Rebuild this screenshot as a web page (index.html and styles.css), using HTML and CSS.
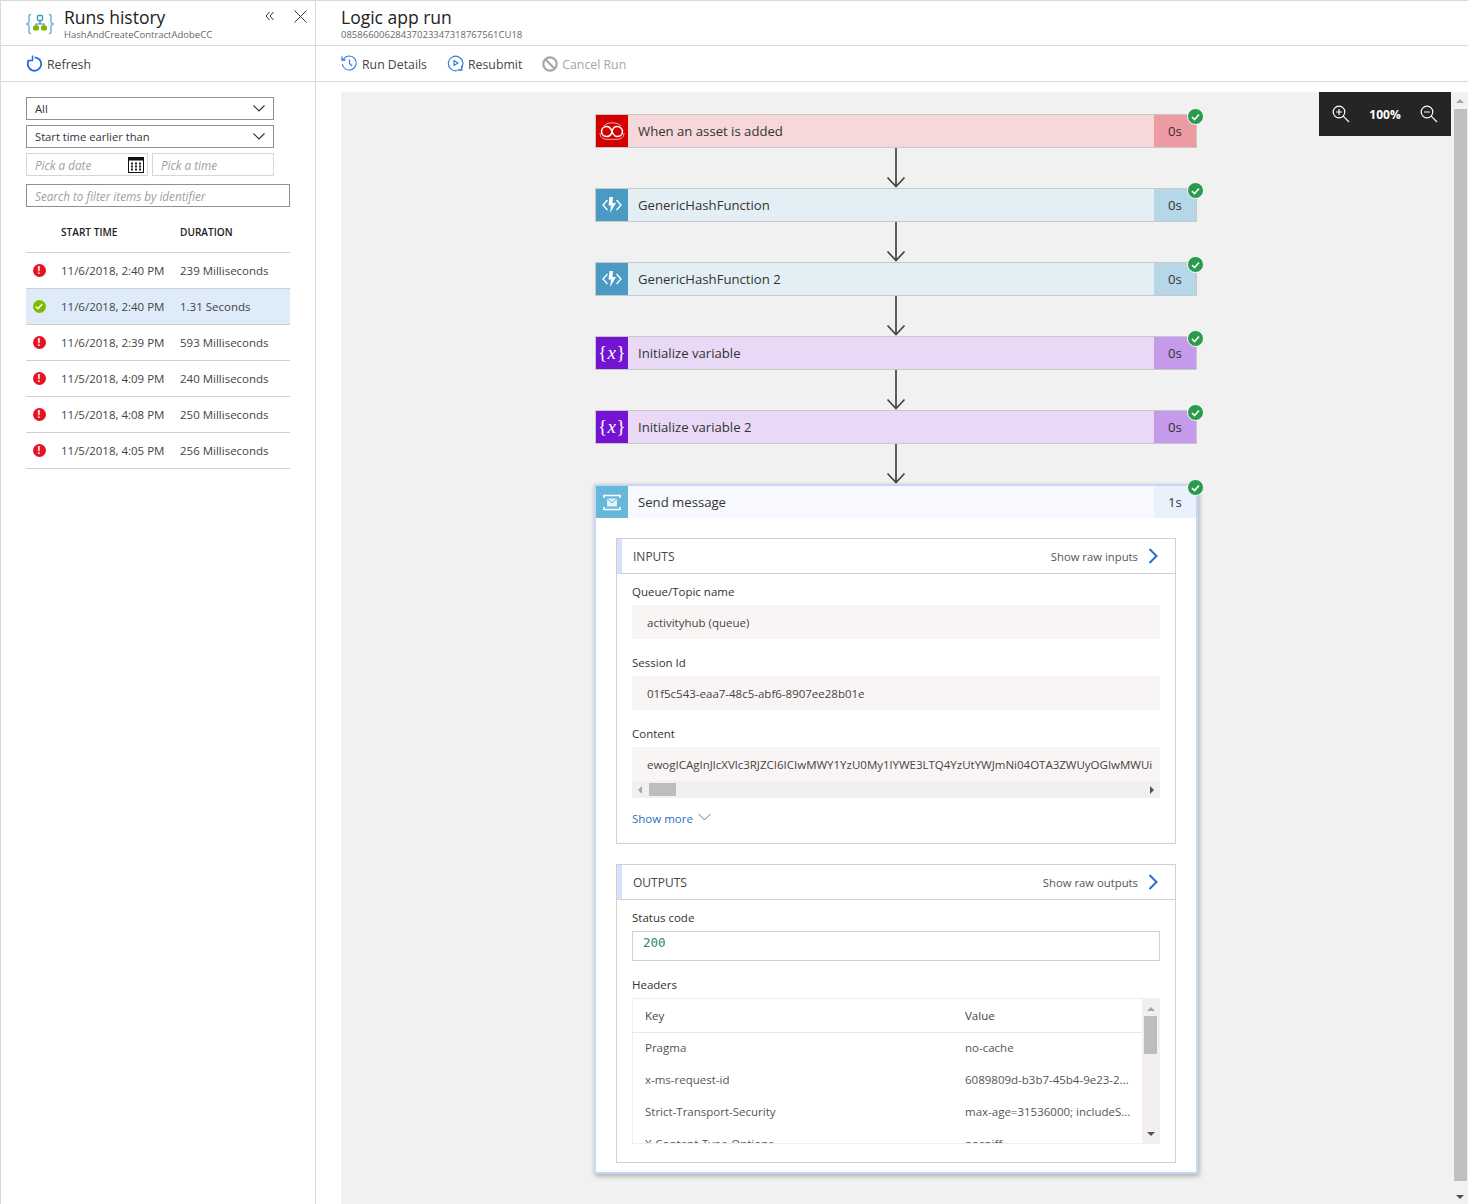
FILE: index.html
```html
<!DOCTYPE html>
<html>
<head>
<meta charset="utf-8">
<title>Logic app run</title>
<link rel="stylesheet" href="styles.css">
</head>
<body>
<div class="app">

    <div class="blade blade-side">
        <div class="bladeHeader sideHeader">
            <svg class="appIcon" width="28" height="24" viewBox="0 0 28 24" fill="none">
                <path d="M5 2.500C2.500 2.500 3 4 3 7V9.500C3 11 2 11.500 1 12C2 12.500 3 13 3 14.500V17C3 20 2.500 21.500 5 21.500" stroke="#59b4d9" stroke-width="1.400"/>
                <path d="M23 2.500C25.500 2.500 25 4 25 7V9.500C25 11 26 11.500 27 12C26 12.500 25 13 25 14.500V17C25 20 25.500 21.500 23 21.500" stroke="#59b4d9" stroke-width="1.400"/>
                <path d="M14 8V12M10 17V12H18V17" stroke="#3f7fb5" stroke-width="1.200"/>
                <rect x="11.500" y="3.500" width="5" height="5" rx="1" fill="#fff" stroke="#3999c6" stroke-width="1.400"/>
                <rect x="7" y="13.500" width="6" height="5" rx="1.500" fill="#7fba00"/>
                <rect x="15" y="13.500" width="6" height="5" rx="1.500" fill="#7fba00"/>
            </svg>
            <div class="titleBlock">
                <div class="bladeTitle">Runs history</div>
                <div class="bladeSub">HashAndCreateContractAdobeCC</div>
            </div>
            <svg class="collapseIcon" width="10" height="10" viewBox="0 0 10 10" fill="none" stroke="#333" stroke-width="1">
                <path d="M4.500 1L1 5L4.500 9M8.500 1L5 5L8.500 9"/>
            </svg>
            <svg class="closeIcon" width="13" height="13" viewBox="0 0 13 13" fill="none" stroke="#333" stroke-width="1">
                <path d="M.5 .5L12.500 12.500M12.500 .5L.5 12.500"/>
            </svg>
        </div>
        <div class="toolbar sideToolbar">
            <div class="toolButton">
                <svg width="17" height="17" viewBox="0 0 17 17" fill="none" stroke="#1d6fd1">
                    <path d="M8.500 2.300A6.700 6.700 0 1 1 2.600 5.800" stroke-width="1.800"/>
                    <path d="M6.500 .5V5.500H1.500" stroke-width="1.500"/>
                </svg>
                <span>Refresh</span>
            </div>
        </div>
        <div class="filters">
            <div class="selectBox"><span>All</span><svg width="12" height="7" viewBox="0 0 12 7" fill="none" stroke="#333" stroke-width="1.200"><path d="M.5 .5L6 6L11.500 .5"/></svg></div>
            <div class="selectBox"><span>Start time earlier than</span><svg width="12" height="7" viewBox="0 0 12 7" fill="none" stroke="#333" stroke-width="1.200"><path d="M.5 .5L6 6L11.500 .5"/></svg></div>
            <div class="dateRow">
                <div class="inputBox inputLight">
                    <span>Pick a date</span>
                    <svg class="calendar" width="16" height="16" viewBox="0 0 16 16">
                        <rect x=".5" y=".5" width="15" height="15" fill="#fff" stroke="#111"/>
                        <rect x="0" y="0" width="16" height="3.500" fill="#111"/>
                        <path d="M3 5.500h2v2H3zM7 5.500h2v2H7zM11 5.500h2v2h-2zM3 8.500h2v2H3zM7 8.500h2v2H7zM11 8.500h2v2h-2zM3 11.500h2v2H3zM7 11.500h2v2H7zM11 11.500h2v2h-2z" fill="#222"/>
                    </svg>
                </div>
                <div class="inputBox inputLight"><span>Pick a time</span></div>
            </div>
            <div class="inputBox searchBox"><span>Search to filter items by identifier</span></div>
        </div>
        <div class="runs">
            <div class="runRow runHead">
                <span class="colIcon"></span>
                <span class="colStart">START TIME</span>
                <span class="colDur">DURATION</span>
            </div>
            <div class="runRow">
                <span class="colIcon"><span class="dot dotErr">!</span></span>
                <span class="colStart">11/6/2018, 2:40 PM</span>
                <span class="colDur">239 Milliseconds</span>
            </div>
            <div class="runRow runSelected">
                <span class="colIcon"><span class="dot dotOk"><svg width="8" height="7" viewBox="0 0 8 7" fill="none" stroke="#fff" stroke-width="1.500"><path d="M.8 3.500L3 5.700L7.200 1"/></svg></span></span>
                <span class="colStart">11/6/2018, 2:40 PM</span>
                <span class="colDur">1.31 Seconds</span>
            </div>
            <div class="runRow">
                <span class="colIcon"><span class="dot dotErr">!</span></span>
                <span class="colStart">11/6/2018, 2:39 PM</span>
                <span class="colDur">593 Milliseconds</span>
            </div>
            <div class="runRow">
                <span class="colIcon"><span class="dot dotErr">!</span></span>
                <span class="colStart">11/5/2018, 4:09 PM</span>
                <span class="colDur">240 Milliseconds</span>
            </div>
            <div class="runRow">
                <span class="colIcon"><span class="dot dotErr">!</span></span>
                <span class="colStart">11/5/2018, 4:08 PM</span>
                <span class="colDur">250 Milliseconds</span>
            </div>
            <div class="runRow">
                <span class="colIcon"><span class="dot dotErr">!</span></span>
                <span class="colStart">11/5/2018, 4:05 PM</span>
                <span class="colDur">256 Milliseconds</span>
            </div>
        </div>
    </div>

    <div class="blade blade-main">
        <div class="bladeHeader mainHeader">
            <div class="titleBlock">
                <div class="bladeTitle">Logic app run</div>
                <div class="bladeSub">08586600628437023347318767561CU18</div>
            </div>
        </div>
        <div class="toolbar mainToolbar">
            <div class="toolButton">
                <svg width="17" height="17" viewBox="0 0 17 17" fill="none" stroke="#2b79d6" stroke-width="1.100">
                    <path d="M2.500 4A7 7 0 1 1 1.300 9"/>
                    <path d="M1 1.500V5H4.500" stroke-width="1.300"/>
                    <path d="M8.500 4.500V8.500L11 11"/>
                </svg>
                <span>Run Details</span>
            </div>
            <div class="toolButton">
                <svg width="17" height="17" viewBox="0 0 17 17" fill="none" stroke="#2b79d6" stroke-width="1.100">
                    <path d="M14 13.500A7.300 7.300 0 1 0 10 15.700"/>
                    <path d="M7 5.500V10.500L11 8Z"/>
                    <path d="M14.800 10.500V15H10.500" stroke-width="1.300"/>
                </svg>
                <span>Resubmit</span>
            </div>
            <div class="toolButton toolDisabled">
                <svg width="16" height="16" viewBox="0 0 16 16" fill="none" stroke="#a6a6a6" stroke-width="2.200">
                    <circle cx="8" cy="8" r="6.700"/>
                    <path d="M3.200 3.200L12.800 12.800"/>
                </svg>
                <span>Cancel Run</span>
            </div>
        </div>
        <div class="mainBody">
            <div class="canvas">
                <div class="zoomBar">
                    <svg width="20" height="20" viewBox="0 0 20 20" fill="none" stroke="#fff" stroke-width="1.200">
                        <circle cx="8" cy="8" r="5.800"/><path d="M12.200 12.200L18 18M5 8H11M8 5V11"/>
                    </svg>
                    <span class="zoomText">100%</span>
                    <svg width="20" height="20" viewBox="0 0 20 20" fill="none" stroke="#fff" stroke-width="1.200">
                        <circle cx="8" cy="8" r="5.800"/><path d="M12.200 12.200L18 18M5 8H11"/>
                    </svg>
                </div>

                <div class="card cardRed">
                    <div class="cardIcon">
                        <svg width="26" height="18" viewBox="0 0 26 18" fill="none" stroke="#fff">
                            <path d="M8 5.500C4.500 5.500 2.500 8 2.500 10.500C2.500 13.500 5 15.500 8 15.500C11 15.500 12.500 13 13 10.500C13.500 8 15 5.500 18 5.500C21 5.500 23.500 8 23.500 10.500C23.500 13.500 21 15.500 18 15.500C15 15.500 14 13 13 10.500C12 8 11 5.500 8 5.500Z" stroke-width="1.500" transform="translate(0 -1)"/>
                            <path d="M5 4C6.500 2 9.500 .8 13 .8C17 .8 20.500 2 22 4M1 11C1 14.500 3.500 17 7 17.300H19C22.500 17 25 14.500 25 11" stroke-width=".7"/>
                        </svg>
                    </div>
                    <div class="cardTitle">When an asset is added</div>
                    <div class="cardTime">0s</div>
                    <span class="badge"><svg width="9" height="8" viewBox="0 0 9 8" fill="none" stroke="#fff" stroke-width="1.600"><path d="M1 4L3.500 6.500L8 1.500"/></svg></span>
                </div>
                <svg class="arrow" width="22" height="40" viewBox="0 0 22 40" fill="none" stroke="#444" stroke-width="1.700"><path d="M11 0V39M2.500 29.500L11 38.500L19.500 29.500"/></svg>

                <div class="card cardBlue">
                    <div class="cardIcon">
                        <svg width="20" height="18" viewBox="0 0 20 18">
                            <path d="M5.500 4L1 9L5.500 14M14.500 4L19 9L14.500 14" fill="none" stroke="#fff" stroke-width="1.300"/>
                            <path d="M11 1H7.500L6.500 9.500H9L8 17L14 7H10.500Z" fill="#fff"/>
                        </svg>
                    </div>
                    <div class="cardTitle">GenericHashFunction</div>
                    <div class="cardTime">0s</div>
                    <span class="badge"><svg width="9" height="8" viewBox="0 0 9 8" fill="none" stroke="#fff" stroke-width="1.600"><path d="M1 4L3.500 6.500L8 1.500"/></svg></span>
                </div>
                <svg class="arrow" width="22" height="40" viewBox="0 0 22 40" fill="none" stroke="#444" stroke-width="1.700"><path d="M11 0V39M2.500 29.500L11 38.500L19.500 29.500"/></svg>

                <div class="card cardBlue">
                    <div class="cardIcon">
                        <svg width="20" height="18" viewBox="0 0 20 18">
                            <path d="M5.500 4L1 9L5.500 14M14.500 4L19 9L14.500 14" fill="none" stroke="#fff" stroke-width="1.300"/>
                            <path d="M11 1H7.500L6.500 9.500H9L8 17L14 7H10.500Z" fill="#fff"/>
                        </svg>
                    </div>
                    <div class="cardTitle">GenericHashFunction 2</div>
                    <div class="cardTime">0s</div>
                    <span class="badge"><svg width="9" height="8" viewBox="0 0 9 8" fill="none" stroke="#fff" stroke-width="1.600"><path d="M1 4L3.500 6.500L8 1.500"/></svg></span>
                </div>
                <svg class="arrow" width="22" height="40" viewBox="0 0 22 40" fill="none" stroke="#444" stroke-width="1.700"><path d="M11 0V39M2.500 29.500L11 38.500L19.500 29.500"/></svg>

                <div class="card cardPurple">
                    <div class="cardIcon varIcon">{<i>x</i>}</div>
                    <div class="cardTitle">Initialize variable</div>
                    <div class="cardTime">0s</div>
                    <span class="badge"><svg width="9" height="8" viewBox="0 0 9 8" fill="none" stroke="#fff" stroke-width="1.600"><path d="M1 4L3.500 6.500L8 1.500"/></svg></span>
                </div>
                <svg class="arrow" width="22" height="40" viewBox="0 0 22 40" fill="none" stroke="#444" stroke-width="1.700"><path d="M11 0V39M2.500 29.500L11 38.500L19.500 29.500"/></svg>

                <div class="card cardPurple">
                    <div class="cardIcon varIcon">{<i>x</i>}</div>
                    <div class="cardTitle">Initialize variable 2</div>
                    <div class="cardTime">0s</div>
                    <span class="badge"><svg width="9" height="8" viewBox="0 0 9 8" fill="none" stroke="#fff" stroke-width="1.600"><path d="M1 4L3.500 6.500L8 1.500"/></svg></span>
                </div>
                <svg class="arrow" width="22" height="40" viewBox="0 0 22 40" fill="none" stroke="#444" stroke-width="1.700"><path d="M11 0V39M2.500 29.500L11 38.500L19.500 29.500"/></svg>

                <div class="card cardOpen">
                    <div class="openHead">
                        <div class="cardIcon">
                            <svg width="18" height="17" viewBox="0 0 18 17">
                                <path d="M1 4V1.500H17V4M1 13V15.500H17V13" fill="none" stroke="#fff" stroke-width="1.600"/>
                                <rect x="4" y="4.500" width="10" height="8" fill="#e4f2f9"/>
                                <path d="M4 4.500L9 9L14 4.500" fill="none" stroke="#66b8da"/>
                            </svg>
                        </div>
                        <div class="cardTitle">Send message</div>
                        <div class="cardTime">1s</div>
                    </div>
                    <span class="badge"><svg width="9" height="8" viewBox="0 0 9 8" fill="none" stroke="#fff" stroke-width="1.600"><path d="M1 4L3.500 6.500L8 1.500"/></svg></span>

                    <div class="panel">
                        <div class="panelHead">
                            <span class="panelTitle">INPUTS</span>
                            <span class="rawLink">Show raw inputs</span>
                            <svg width="10" height="16" viewBox="0 0 10 16" fill="none" stroke="#2a6fc0" stroke-width="2"><path d="M1.500 1L8.500 8L1.500 15"/></svg>
                        </div>
                        <div class="panelBody">
                            <div class="fieldLabel">Queue/Topic name</div>
                            <div class="fieldValue">activityhub (queue)</div>
                            <div class="fieldLabel">Session Id</div>
                            <div class="fieldValue">01f5c543-eaa7-48c5-abf6-8907ee28b01e</div>
                            <div class="fieldLabel">Content</div>
                            <div class="fieldValue">ewogICAgInJlcXVlc3RJZCI6ICIwMWY1YzU0My1lYWE3LTQ4YzUtYWJmNi04OTA3ZWUyOGIwMWUi</div>
                            <div class="hScroll">
                                <span class="triLeft"></span>
                                <span class="hThumb"></span>
                                <span class="triRight"></span>
                            </div>
                            <div class="showMore">
                                <span>Show more</span>
                                <svg width="13" height="8" viewBox="0 0 13 8" fill="none" stroke="#2a6fc0" stroke-width=".9"><path d="M.5 1L6.500 7L12.500 1"/></svg>
                            </div>
                        </div>
                    </div>

                    <div class="panel panelOut">
                        <div class="panelHead">
                            <span class="panelTitle">OUTPUTS</span>
                            <span class="rawLink">Show raw outputs</span>
                            <svg width="10" height="16" viewBox="0 0 10 16" fill="none" stroke="#2a6fc0" stroke-width="2"><path d="M1.500 1L8.500 8L1.500 15"/></svg>
                        </div>
                        <div class="panelBody">
                            <div class="fieldLabel">Status code</div>
                            <div class="statusBox">200</div>
                            <div class="fieldLabel">Headers</div>
                            <div class="kvTable">
                                <div class="kvRows">
                                    <div class="kvRow kvHead"><span class="kvKey">Key</span><span class="kvVal">Value</span></div>
                                    <div class="kvRow"><span class="kvKey">Pragma</span><span class="kvVal">no-cache</span></div>
                                    <div class="kvRow"><span class="kvKey">x-ms-request-id</span><span class="kvVal">6089809d-b3b7-45b4-9e23-2...</span></div>
                                    <div class="kvRow"><span class="kvKey">Strict-Transport-Security</span><span class="kvVal">max-age=31536000; includeS...</span></div>
                                    <div class="kvRow"><span class="kvKey">X-Content-Type-Options</span><span class="kvVal">nosniff</span></div>
                                </div>
                                <div class="vScroll">
                                    <span class="triUp"></span>
                                    <span class="vThumb"></span>
                                    <span class="triDown"></span>
                                </div>
                            </div>
                        </div>
                    </div>
                </div>
            </div>
            <div class="pageScroll">
                <span class="triUp"></span>
                <span class="pageThumb"></span>
                <span class="triDown"></span>
            </div>
        </div>
    </div>

</div>
</body>
</html>
```

FILE: styles.css
```css
* {
    box-sizing: border-box;
}

html, body {
    margin: 0;
    height: 100%;
    overflow: hidden;
}

body {
    background-color: white;
    color: #333;
    font-family: "Open Sans", "Liberation Sans", sans-serif;
    font-size: 11.500px;
}

.app {
    display: flex;
    height: 100vh;
    border-top: 1px solid #d9d9d9;
    border-left: 1px solid #d9d9d9;
}

.blade {
    display: flex;
    flex-direction: column;
    height: 100%;
}

.blade-side {
    width: 315px;
    flex: none;
    border-right: 1px solid #d9d9d9;
}

.blade-main {
    flex: 1;
    min-width: 0;
}

/* headers */

.bladeHeader {
    display: flex;
    align-items: flex-start;
    height: 45px;
    flex: none;
    border-bottom: 1px solid #d9d9d9;
}

.sideHeader {
    padding: 0 0 0 25px;
}

.mainHeader {
    padding-left: 25px;
}

.appIcon {
    margin-top: 11px;
    margin-right: 10px;
}

.titleBlock {
    flex: 1;
    padding-top: 4px;
}

.bladeTitle {
    font-size: 17.500px;
    line-height: 24px;
    color: #222;
}

.bladeSub {
    font-size: 9.500px;
    line-height: 12px;
    color: #666;
}

.collapseIcon {
    margin-top: 10px;
    margin-right: 19px;
}

.closeIcon {
    margin-top: 9px;
    margin-right: 8px;
}

.toolbar {
    display: flex;
    align-items: center;
    height: 36px;
    flex: none;
    border-bottom: 1px solid #d9d9d9;
}

.sideToolbar {
    padding-left: 25px;
}

.mainToolbar {
    padding-left: 25px;
    gap: 20px;
}

.toolButton {
    display: flex;
    align-items: center;
    gap: 4px;
    font-size: 12.300px;
    color: #444;
}

.toolButton span {
    padding-top: 2px;
}

.toolDisabled {
    color: #a6a6a6;
}

/* filters */

.filters {
    display: flex;
    flex-direction: column;
    gap: 5px;
    padding: 15px 25px 0;
}

.selectBox {
    display: flex;
    align-items: center;
    justify-content: space-between;
    width: 248px;
    height: 23px;
    padding: 0 8px;
    border: 1px solid #8f8f8f;
    font-size: 11.200px;
    color: #333;
}

.dateRow {
    display: flex;
    gap: 4px;
    width: 248px;
}

.inputBox {
    display: flex;
    align-items: center;
    justify-content: space-between;
    height: 23px;
    padding: 0 8px;
    font-size: 11.700px;
    font-style: italic;
    color: #a0a0a0;
}

.inputLight {
    flex: 1;
    border: 1px solid #d6d6d6;
}

.inputLight span {
    padding-top: 1px;
}

.calendar {
    margin-right: -5px;
    flex: none;
}

.searchBox {
    width: 264px;
    margin-top: 3px;
    border: 1px solid #8f8f8f;
}

/* runs list */

.runs {
    margin: 0 25px;
}

.runRow {
    display: flex;
    align-items: center;
    height: 36px;
    border-bottom: 1px solid #d0d0d0;
    color: #444;
}

.runHead {
    height: 46px;
    padding-top: 4px;
    font-size: 10.100px;
    font-weight: 600;
    color: #222;
}

.runSelected {
    background-color: #deecf9;
}

.colIcon {
    display: flex;
    justify-content: center;
    width: 35px;
    flex: none;
    padding-right: 9px;
}

.colStart {
    width: 119px;
    flex: none;
}

.colDur {
    flex: 1;
}

.dot {
    display: flex;
    align-items: center;
    justify-content: center;
    width: 13px;
    height: 13px;
    border-radius: 50%;
    color: white;
    font-size: 10px;
    font-weight: 700;
    line-height: 13px;
}

.dotErr {
    background-color: #e81123;
}

.dotOk {
    background-color: #7fba00;
}

/* main area */

.mainBody {
    display: flex;
    flex: 1;
    min-height: 0;
    padding: 10px 0 0 25px;
}

.canvas {
    position: relative;
    flex: 1;
    display: flex;
    flex-direction: column;
    align-items: center;
    padding: 22px 1px 0 0;
    background-color: #f1f1f1;
    overflow: hidden;
}

.zoomBar {
    position: absolute;
    top: 0;
    right: 1px;
    display: flex;
    align-items: center;
    justify-content: space-between;
    width: 132px;
    height: 44px;
    padding: 0 12px;
    background-color: #252525;
}

.zoomText {
    color: white;
    font-size: 12px;
    font-weight: 700;
}

.pageScroll {
    display: flex;
    flex-direction: column;
    align-items: center;
    width: 16px;
    flex: none;
    padding-top: 7px;
    background-color: #f1f1f1;
}

.pageThumb {
    width: 13px;
    height: 1072px;
    margin: 6px 0 14px;
    background-color: #c0c0c0;
}

.triUp {
    width: 0;
    height: 0;
    border-left: 4px solid transparent;
    border-right: 4px solid transparent;
    border-bottom: 4px solid #a6a6a6;
}

.triDown {
    width: 0;
    height: 0;
    border-left: 4px solid transparent;
    border-right: 4px solid transparent;
    border-top: 4px solid #505050;
}

/* cards */

.card {
    position: relative;
    display: flex;
    width: 602px;
    height: 34px;
    flex: none;
    border: 1px solid #c8c8c8;
    font-size: 13.150px;
}

.cardIcon {
    display: flex;
    align-items: center;
    justify-content: center;
    width: 32px;
    flex: none;
    color: white;
}

.cardTitle {
    flex: 1;
    display: flex;
    align-items: center;
    padding-left: 10px;
    color: #333;
}

.cardTime {
    display: flex;
    align-items: center;
    justify-content: center;
    width: 42px;
    flex: none;
    color: #333;
}

.cardRed .cardIcon { background-color: #d40000; }
.cardRed .cardTitle { background-color: #f6d7da; }
.cardRed .cardTime { background-color: #ee9aa2; }

.cardBlue .cardIcon { background-color: #4a9ac4; }
.cardBlue .cardTitle { background-color: #e4eff5; }
.cardBlue .cardTime { background-color: #b6d7e8; }

.cardPurple .cardIcon { background-color: #7413d1; }
.cardPurple .cardTitle { background-color: #e9d9f6; }
.cardPurple .cardTime { background-color: #c69aea; }

.varIcon {
    font-family: "Liberation Serif", serif;
    font-size: 19px;
    letter-spacing: .5px;
}

.badge {
    position: absolute;
    top: -7px;
    right: -8px;
    display: flex;
    align-items: center;
    justify-content: center;
    width: 17px;
    height: 17px;
    border: 1px solid white;
    border-radius: 50%;
    background-color: #2a9a4f;
}

.arrow {
    flex: none;
    display: block;
}

.cardOpen {
    display: block;
    width: 604px;
    height: 690px;
    border: 2px solid #c7d7f7;
    background-color: white;
    box-shadow: 1px 2px 5px rgba(0, 0, 0, 0.3);
}

.openHead {
    display: flex;
    height: 32px;
    background-color: #f7f9fe;
}

.openHead .cardIcon {
    background-color: #66b8da;
}

.openHead .cardTitle {
    background-color: #f7f9fe;
}

.openHead .cardTime {
    background-color: #eaf0fc;
}

/* inputs and outputs panels */

.panel {
    margin: 20px 20px 0;
    height: 306px;
    border: 1px solid #d0d0d0;
    font-size: 11.500px;
}

.panelOut {
    height: 299px;
}

.panelHead {
    display: flex;
    align-items: center;
    gap: 10px;
    height: 35px;
    padding: 0 17px 0 11px;
    border-left: 5px solid #d7e2fa;
    border-bottom: 1px solid #d0d0d0;
}

.panelTitle {
    flex: 1;
    font-size: 12px;
    color: #444;
}

.rawLink {
    font-size: 11.300px;
    color: #555;
}

.panelBody {
    padding: 0 15px;
}

.fieldLabel {
    display: flex;
    align-items: center;
    height: 31px;
    padding-top: 3px;
    color: #333;
}

.fieldValue {
    display: flex;
    align-items: center;
    height: 34px;
    padding: 0 15px;
    overflow: hidden;
    white-space: nowrap;
    color: #444;
    background-color: #faf5f5;
}

.fieldValue + .fieldLabel,
.statusBox + .fieldLabel {
    height: 37px;
    padding-top: 9px;
}

.hScroll {
    display: flex;
    align-items: center;
    height: 17px;
    padding: 0 6px;
    background-color: #f0f0f0;
}

.hThumb {
    width: 27px;
    height: 13px;
    margin-left: 7px;
    margin-right: auto;
    background-color: #bdbdbd;
}

.triLeft {
    width: 0;
    height: 0;
    border-top: 4px solid transparent;
    border-bottom: 4px solid transparent;
    border-right: 4px solid #a6a6a6;
}

.triRight {
    width: 0;
    height: 0;
    border-top: 4px solid transparent;
    border-bottom: 4px solid transparent;
    border-left: 4px solid #505050;
}

.showMore {
    display: flex;
    align-items: center;
    gap: 5px;
    height: 40px;
    color: #2a6fc0;
}

.showMore svg {
    margin-top: -2px;
}

.statusBox {
    height: 30px;
    padding: 3px 10px;
    border: 1px solid #d0d0d0;
    font-family: "DejaVu Sans Mono", monospace;
    font-size: 12.500px;
    line-height: 16px;
    color: #1f8a6d;
}

.kvTable {
    display: flex;
    height: 146px;
    border: 1px solid #f2eeee;
    overflow: hidden;
}

.kvRows {
    flex: 1;
    min-width: 0;
}

.kvRow {
    display: flex;
    align-items: center;
    height: 32px;
    padding-left: 12px;
    padding-bottom: 3px;
    color: #555;
    white-space: nowrap;
}

.kvHead {
    height: 34px;
    padding-bottom: 0;
    border-bottom: 1px solid #e8e8e8;
    color: #444;
}

.kvKey {
    width: 320px;
    flex: none;
}

.vScroll {
    display: flex;
    flex-direction: column;
    align-items: center;
    width: 17px;
    flex: none;
    padding-top: 8px;
    background-color: #f3efef;
}

.vThumb {
    width: 13px;
    height: 38px;
    margin: 5px 0 auto;
    background-color: #bdbdbd;
}

.vScroll .triDown {
    margin-bottom: 7px;
}
```
